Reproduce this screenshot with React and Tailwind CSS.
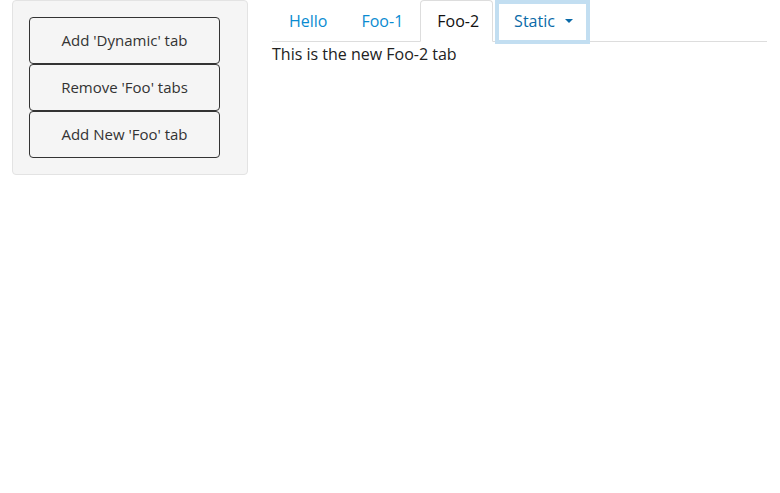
import React, { useState } from "react";

const tabs = ["Hello", "Foo-1", "Foo-2"];

const App = () => {
  const [active, setActive] = useState("Foo-2");

  return (
    <div
      className="min-h-screen bg-white text-[#333]"
      style={{ fontFamily: "'Open Sans', sans-serif" }}
    >
      <div className="flex pl-3 pr-[13px]">
        {/* Sidebar well */}
        <div className="w-[236px] shrink-0 h-[175px] bg-[#f5f5f5] border border-[#e3e3e3] rounded-[4px] pt-4 pl-4">
          <div className="flex flex-col w-[191px]">
            <button className="h-[47px] border border-[#333] rounded-[4px] text-[15px] text-[#333] bg-transparent">
              Add 'Dynamic' tab
            </button>
            <button className="h-[47px] border border-[#333] rounded-[4px] text-[15px] text-[#333] bg-transparent">
              Remove 'Foo' tabs
            </button>
            <button className="h-[47px] border border-[#333] rounded-[4px] text-[15px] text-[#333] bg-transparent">
              Add New 'Foo' tab
            </button>
          </div>
        </div>

        {/* Main */}
        <div className="flex-1 pl-6">
          <div className="flex h-[42px] border-b border-[#ddd]">
            {tabs.map((t) =>
              t === active ? (
                <div
                  key={t}
                  className="h-[42px] pl-[16px] pr-[13px] flex items-center bg-white border border-[#ddd] border-b-white rounded-t-[4px] text-[16px] text-[#111] mr-[2px]"
                >
                  {t}
                </div>
              ) : (
                <button
                  key={t}
                  onClick={() => setActive(t)}
                  className="h-[41px] px-[17px] flex items-center text-[16px] text-[#0a8bd1]"
                >
                  {t}
                </button>
              )
            )}
            <div className="relative h-[41px]">
              <button className="h-[41px] pl-[18px] pr-[16px] flex items-center gap-[10px] text-[16px] text-[#0a6aa8] bg-white border border-[#ddd] rounded-t-[4px]">
                Static
                <span className="w-0 h-0 border-l-[4px] border-r-[4px] border-t-[4px] border-l-transparent border-r-transparent border-t-[#0a6aa8]" />
              </button>
              <div className="absolute left-0 top-0 right-0 -bottom-[3px] border-[4px] border-[#c2def1] pointer-events-none" />
            </div>
          </div>
          <div className="text-[16px] text-[#222]">This is the new Foo-2 tab</div>
        </div>
      </div>
    </div>
  );
};

export default App;
